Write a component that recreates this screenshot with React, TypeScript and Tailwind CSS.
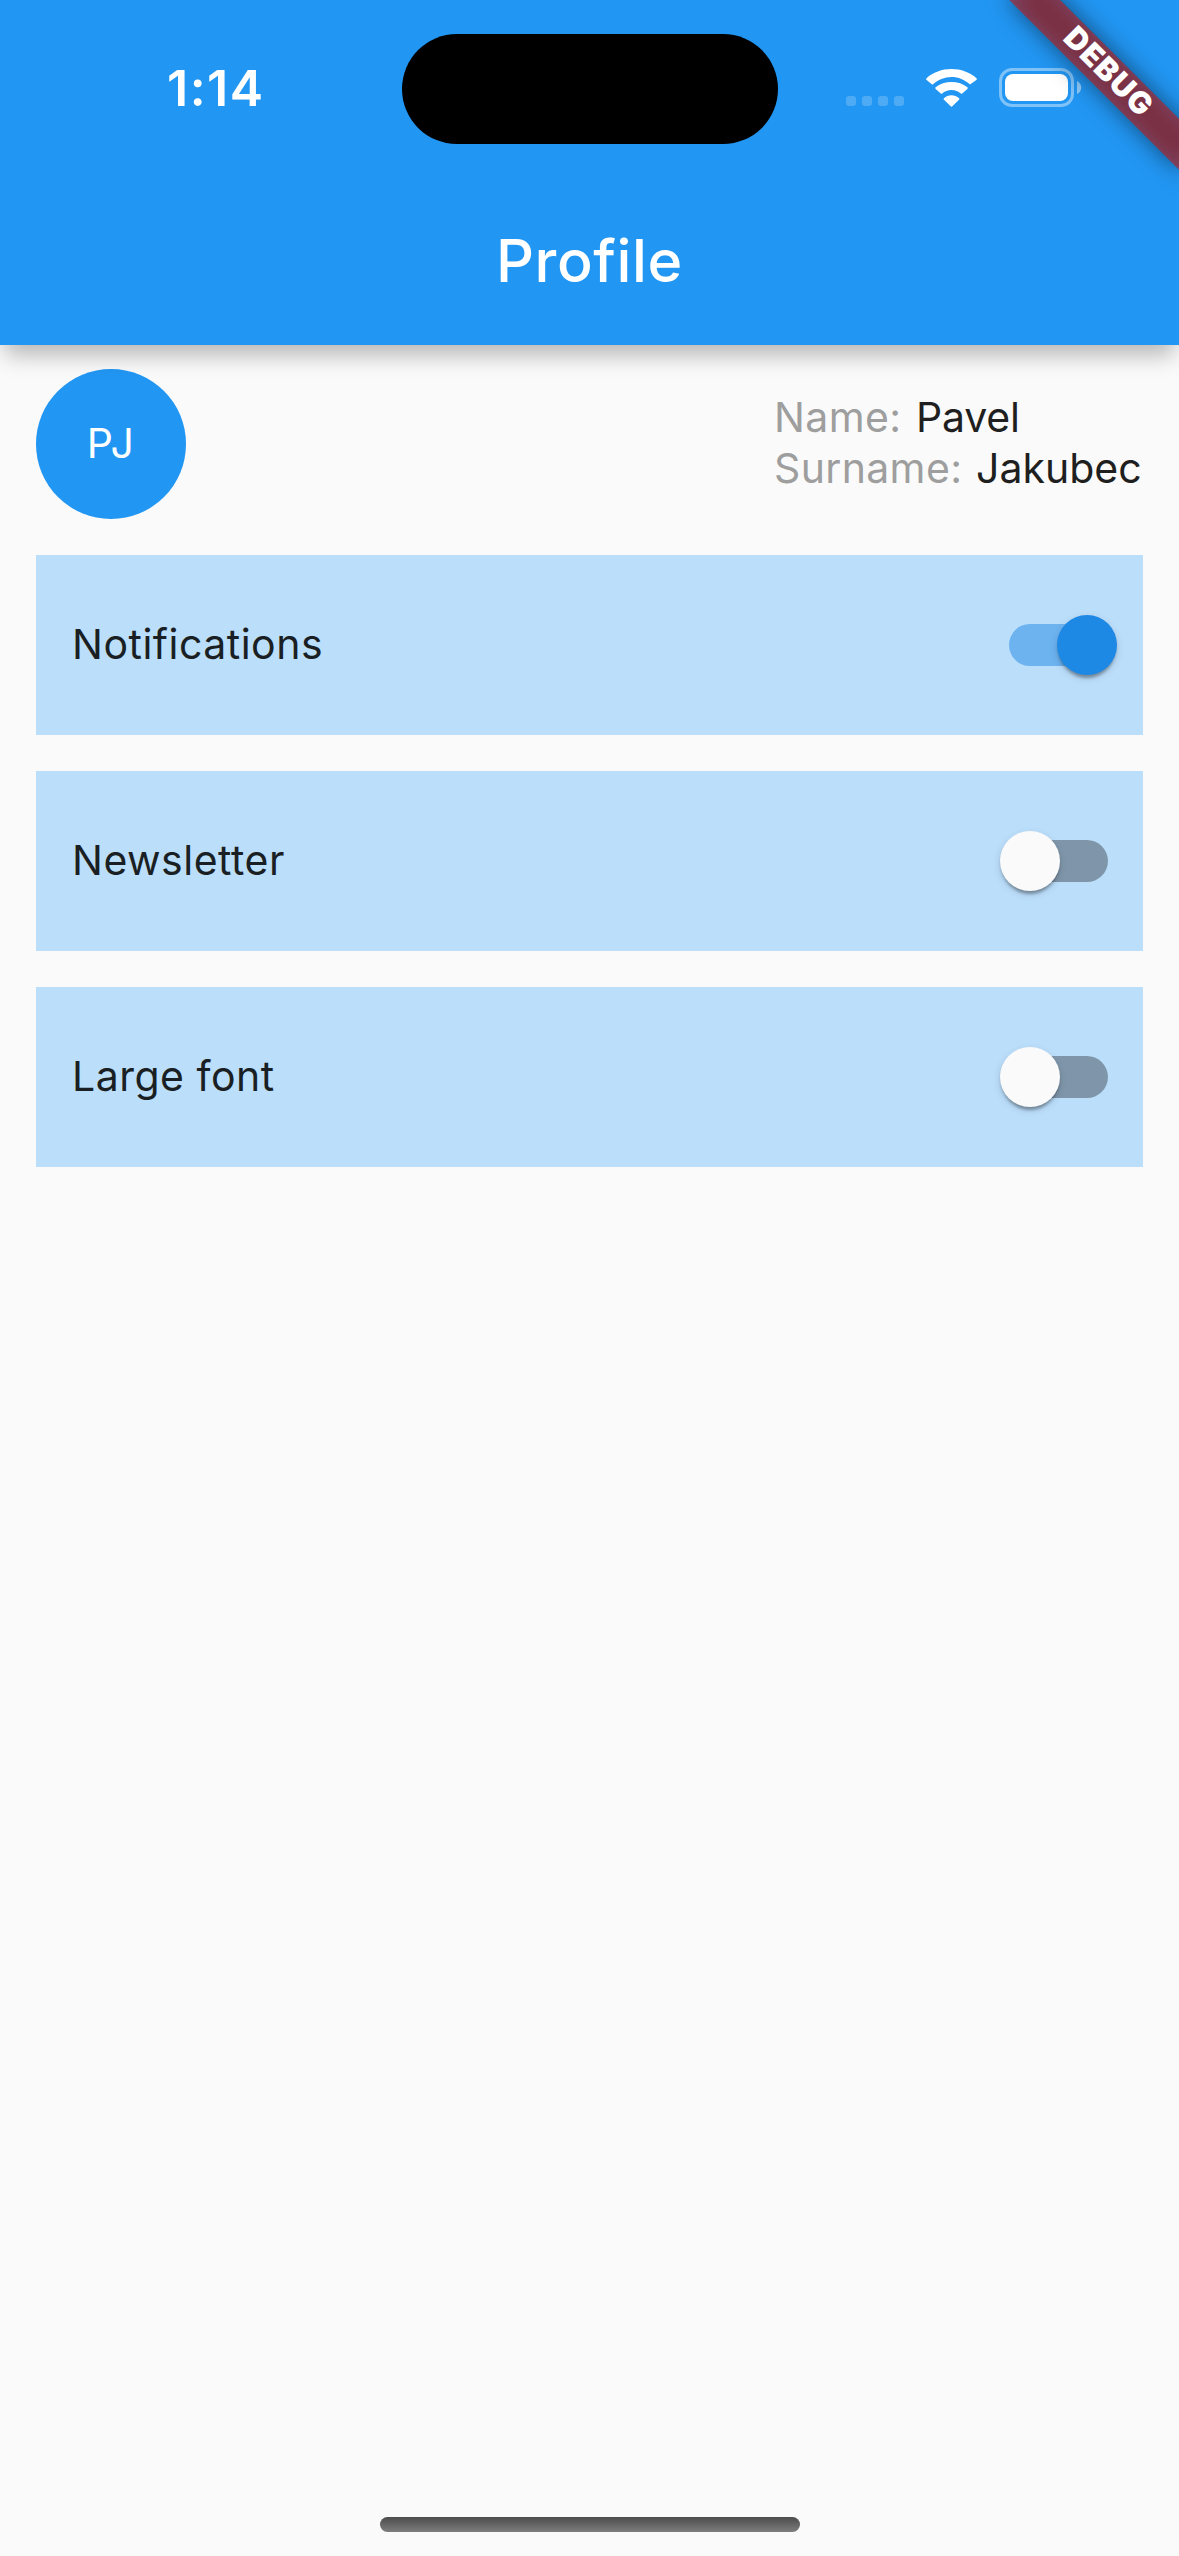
function WifiIcon() {
  return (
    <svg className="h-[38px] w-[51px]" viewBox="0 0 51 38" fill="#fff">
      <path d="M25.5 7.9c6.9 0 13.2 2.7 17.9 7.1.4.4.9.4 1.3 0l5.7-4.1c.6-.6.6-1.2.1-1.7C43.9 3.3 35.1 0 25.5 0S7.100 3.300.5 9.200c-.5.5-.5 1.100.1 1.700l5.200 4.400c.4.400.9.400 1.300 0 4.900-4.600 11.400-7.400 18.400-7.400Z" />
      <path d="M25.5 20.9c3.7 0 6.8 1.2 9.3 3.500.5.4 1 .4 1.400 0l5.200-4.400c.5-.6.5-1.200 0-1.700-4.200-3.600-9.900-5.300-15.900-5.300s-11.700 1.700-15.900 5.300c-.5.5-.5 1.100 0 1.700l5.200 4.400c.4.400.9.400 1.400 0 2.500-2.300 5.600-3.500 9.300-3.500Z" />
      <path d="M33.1 29.2c.5.5.4 1.100-.1 1.600l-6.400 6.300c-.7.7-1.500.7-2.200 0L18 30.800c-.5-.5-.6-1.100-.1-1.600 4.200-4.100 11-4.100 15.200 0Z" />
    </svg>
  );
}

function BatteryIcon() {
  return (
    <svg className="h-[39px] w-[83px]" viewBox="0 0 83 39" fill="none">
      <rect x="1.5" y="1.5" width="72" height="36" rx="11.5" stroke="#fff" strokeOpacity=".42" strokeWidth="3" />
      <rect x="6" y="6" width="63" height="27" rx="8" fill="#fff" />
      <path d="M78 12.900v13.200c2.500-1.100 4.200-3.700 4.200-6.600s-1.700-5.500-4.200-6.600Z" fill="#fff" fillOpacity=".5" />
    </svg>
  );
}

function SignalDots() {
  return (
    <div className="mt-[26px] flex gap-[6px]">
      {[0, 1, 2, 3].map((i) => (
        <span key={i} className="size-[10px] rounded-[3px] bg-white/20" />
      ))}
    </div>
  );
}

function StatusBar() {
  return (
    <div className="flex h-[177px] items-start pt-[33px]">
      <div className="flex h-[110px] w-[401.5px] shrink-0 items-center pl-[167px] text-[50px] font-semibold tracking-[1.5px] text-white">
        1:14
      </div>
      <div className="mt-[0.5px] h-[110.5px] w-[376px] shrink-0 rounded-full bg-black" />
      <div className="flex h-[109px] items-center pl-[68.5px]">
        <SignalDots />
        <div className="ml-[22px]">
          <WifiIcon />
        </div>
        <div className="ml-[22px]">
          <BatteryIcon />
        </div>
      </div>
    </div>
  );
}

function DebugBanner() {
  return (
    <div className="pointer-events-none absolute inset-0 overflow-hidden">
      <div className="absolute left-full top-0 size-0 origin-top-left rotate-45">
        <div className="absolute left-[-120px] top-[84px] h-[36px] w-[240px] bg-black/50 blur-[12px]" />
        <div className="absolute left-[-120px] top-[84px] flex h-[36px] w-[240px] items-center justify-center bg-[#b71c1c]/63 pb-[3px] pl-[2px] text-[30.6px] leading-none font-black tracking-[1.1px] text-white">
          DEBUG
        </div>
      </div>
    </div>
  );
}

function Toggle({ on }: { on: boolean }) {
  return (
    <div
      role="switch"
      aria-checked={on}
      className={`relative h-[42px] w-[99px] rounded-full ${on ? "bg-[#1e88e5]/50" : "bg-black/32"}`}
    >
      <div
        className={`absolute -top-[9px] size-[60px] rounded-full shadow-[0_6px_3px_-3px_rgba(0,0,0,0.2),0_3px_3px_0_rgba(0,0,0,0.14),0_3px_9px_0_rgba(0,0,0,0.12)] ${on ? "left-[48px] bg-[#1e88e5]" : "-left-[9px] bg-[#fafafa]"}`}
      />
    </div>
  );
}

const settings = [
  { label: "Notifications", on: true },
  { label: "Newsletter", on: false },
  { label: "Large font", on: false },
];

export default function App() {
  return (
    <div className="relative flex h-[2556px] w-[1179px] flex-col overflow-hidden bg-[#fafafa] font-['Inter',sans-serif] text-[41px] text-[#1f1f1f]">
      <header className="relative h-[345px] shrink-0 bg-[#2196f3] shadow-[0_15px_21px_-5px_rgba(0,0,0,0.27)]">
        <StatusBar />
        <div className="flex h-[168px] items-center justify-center text-[59.2px] font-medium tracking-[0.6px] text-white">
          Profile
        </div>
      </header>

      <main className="flex grow flex-col gap-9 px-9 pt-6">
        <section className="flex items-center justify-between">
          <div className="flex size-[150px] items-center justify-center rounded-full bg-[#2196f3] tracking-[1.5px] text-white">
            PJ
          </div>
          <div className="w-[369px] pb-[3px] leading-[51px]">
            <div className="flex">
              <span className="w-[142px] tracking-[0.4px] text-[#9e9e9e]">Name:</span>
              <span className="-tracking-[0.2px]">Pavel</span>
            </div>
            <div className="flex">
              <span className="w-[202px] tracking-[0.35px] text-[#9e9e9e]">Surname:</span>
              <span>Jakubec</span>
            </div>
          </div>
        </section>

        {settings.map(({ label, on }) => (
          <section
            key={label}
            className="flex h-[180px] shrink-0 items-center justify-between bg-[#bbdefb] pl-9 pr-[35px] text-[#1a1f23]"
          >
            <span className="tracking-[0.5px]">{label}</span>
            <Toggle on={on} />
          </section>
        ))}
      </main>

      <div className="mx-auto mb-6 h-[15px] w-[420px] shrink-0 rounded-full bg-linear-to-b from-[#4c4c4c] to-[#7e7e7e]" />
      <DebugBanner />
    </div>
  );
}
